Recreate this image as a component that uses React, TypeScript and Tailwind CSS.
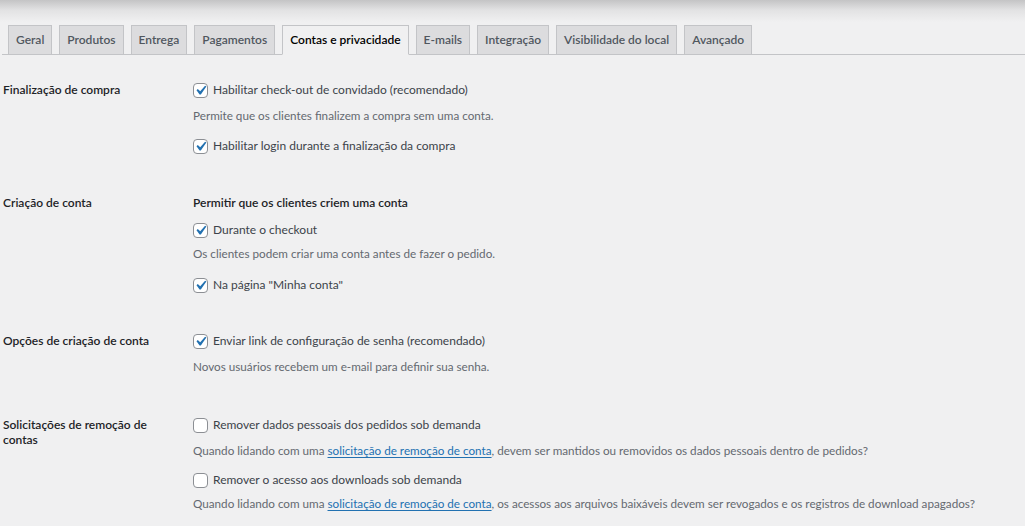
import React from "react";

const tabs = [
  "Geral",
  "Produtos",
  "Entrega",
  "Pagamentos",
  "Contas e privacidade",
  "E-mails",
  "Integração",
  "Visibilidade do local",
  "Avançado",
];

function Check({ checked }: { checked: boolean }) {
  return (
    <span className="flex h-[15px] w-[15px] shrink-0 items-center justify-center rounded-[4px] border border-[#8c8f94] bg-white">
      {checked && (
        <svg width="19" height="19" viewBox="0 0 20 20" className="shrink-0">
          <path d="M14.83 4.89l1.34.94-5.81 8.38H9.02L5.78 9.67l1.34-1.25 2.57 2.4z" fill="#2271b1" />
        </svg>
      )}
    </span>
  );
}

function CheckRow({ checked, children }: { checked: boolean; children: React.ReactNode }) {
  return (
    <div className="flex h-[20px] items-center gap-[5px] whitespace-nowrap text-[12px] text-[#3c434a]">
      <Check checked={checked} />
      <span>{children}</span>
    </div>
  );
}

function Desc({ children }: { children: React.ReactNode }) {
  return (
    <div className="flex h-[20px] items-center whitespace-nowrap text-[11.7px] text-[#646970]">{children}</div>
  );
}

function Link() {
  return <span className="text-[#2271b1] underline underline-offset-2">solicitação de remoção de conta</span>;
}

const labelCls = "w-[190px] shrink-0 pr-[30px] text-[12px] font-semibold leading-[20px] text-[#1d2327]";

export default function App() {
  return (
    <div
      className="min-h-[526px] overflow-hidden bg-[#f0f0f1] text-[#3c434a]"
      style={{ fontFamily: 'Lato, "Noto Sans", sans-serif' }}
    >
      <div className="h-[25px] bg-[linear-gradient(to_bottom,#c4c4c5_0px,#e2e2e3_10px,#f0f0f1_22px)]" />
      <div className="ml-[2px] flex h-[30px] items-end border-b border-[#c3c4c7] pl-[6px]">
        {tabs.map((t, i) => {
          const active = i === 4;
          return (
            <div
              key={t}
              className={
                active
                  ? "mr-[7px] -mb-px flex h-[30px] items-center whitespace-nowrap border border-[#c3c4c7] border-b-[#f0f0f1] bg-[#f0f0f1] px-[7px] text-[12px] font-semibold text-black"
                  : "mr-[7px] -mb-px flex h-[30px] items-center whitespace-nowrap border border-[#c3c4c7] bg-[#dcdcde] px-[7px] text-[12px] font-semibold text-[#50575e]"
              }
            >
              {t}
            </div>
          );
        })}
      </div>

      <div className="pl-[3px]">
        {/* Row 1 */}
        <div className="flex pt-[25px]">
          <div className={labelCls}>Finalização de compra</div>
          <div className="flex flex-col">
            <CheckRow checked>Habilitar check-out de convidado (recomendado)</CheckRow>
            <div className="mt-[6px]">
              <Desc>Permite que os clientes finalizem a compra sem uma conta.</Desc>
            </div>
            <div className="mt-[10px]">
              <CheckRow checked>Habilitar login durante a finalização da compra</CheckRow>
            </div>
          </div>
        </div>

        {/* Row 2 */}
        <div className="flex pt-[37px]">
          <div className={labelCls}>Criação de conta</div>
          <div className="flex flex-col">
            <div className="flex h-[20px] items-center whitespace-nowrap text-[12px] font-semibold text-[#1d2327]">
              Permitir que os clientes criem uma conta
            </div>
            <div className="mt-[7px]">
              <CheckRow checked>Durante o checkout</CheckRow>
            </div>
            <div className="mt-[4px]">
              <Desc>Os clientes podem criar uma conta antes de fazer o pedido.</Desc>
            </div>
            <div className="mt-[11px]">
              <CheckRow checked>Na página "Minha conta"</CheckRow>
            </div>
          </div>
        </div>

        {/* Row 3 */}
        <div className="flex pt-[36px]">
          <div className={labelCls}>Opções de criação de conta</div>
          <div className="flex flex-col">
            <CheckRow checked>Enviar link de configuração de senha (recomendado)</CheckRow>
            <div className="mt-[6px]">
              <Desc>Novos usuários recebem um e-mail para definir sua senha.</Desc>
            </div>
          </div>
        </div>

        {/* Row 4 */}
        <div className="flex pt-[38px]">
          <div className="w-[190px] shrink-0 pr-[30px] pt-[2px] text-[12px] font-semibold leading-[15px] text-[#1d2327]">
            Solicitações de remoção de contas
          </div>
          <div className="flex flex-col">
            <CheckRow checked={false}>Remover dados pessoais dos pedidos sob demanda</CheckRow>
            <div className="mt-[6px]">
              <Desc>
                <span>
                  Quando lidando com uma <Link />, devem ser mantidos ou removidos os dados pessoais dentro de pedidos?
                </span>
              </Desc>
            </div>
            <div className="mt-[9px]">
              <CheckRow checked={false}>Remover o acesso aos downloads sob demanda</CheckRow>
            </div>
            <div className="mt-[4px]">
              <Desc>
                <span>
                  Quando lidando com uma <Link />, os acessos aos arquivos baixáveis devem ser revogados e os registros
                  de download apagados?
                </span>
              </Desc>
            </div>
          </div>
        </div>
      </div>
    </div>
  );
}
